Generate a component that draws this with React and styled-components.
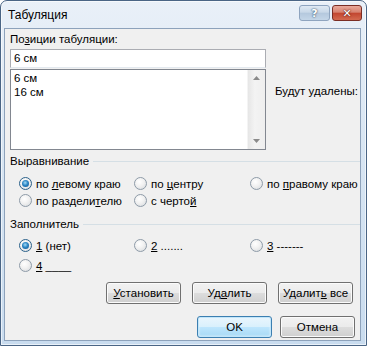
import React from 'react'
import styled, { createGlobalStyle, css } from 'styled-components'

const GlobalStyle = createGlobalStyle`
  html, body {
    margin: 0;
    padding: 0;
    background: #ffffff;
  }
  body {
    font-family: "Liberation Sans", Arial, sans-serif;
    font-size: 11.5px;
    color: #000;
  }
`

const Window = styled.div`
  box-sizing: border-box;
  width: 367px;
  height: 346px;
  display: flex;
  flex-direction: column;
  border: 1px solid #4a6585;
  border-radius: 7px 7px 0 0;
  padding: 0 5px 4px 3px;
  background: linear-gradient(180deg, #e9f0f8 0%, #d9e6f3 40%, #c9dcef 100%);
  box-shadow: inset 0 0 0 1px rgba(255, 255, 255, 0.6);
`

const TitleBar = styled.div`
  height: 27px;
  display: flex;
  align-items: flex-start;
  justify-content: space-between;
`

const Title = styled.div`
  margin: 6px 0 0 4px;
  font-size: 12px;
  line-height: 16px;
  color: #000;
`

const TitleButtons = styled.div`
  display: flex;
  gap: 2px;
  margin-top: 4px;
  margin-right: -1px;
`

const CaptionButton = styled.div`
  box-sizing: border-box;
  height: 16px;
  width: ${p => p.$w}px;
  border: 1px solid ${p => (p.$close ? '#7a2d24' : '#8ea4bf')};
  border-radius: 3px;
  display: flex;
  align-items: center;
  justify-content: center;
  font-family: "DejaVu Sans", sans-serif;
  font-weight: bold;
  font-size: 11px;
  color: #fff;
  text-shadow: 0 0 2px #37536f, 0 0 1px #37536f;
  ${p =>
    p.$close
      ? css`
          background: linear-gradient(180deg, #e9a99b 0%, #d7826f 45%, #c2452f 50%, #d36a4f 100%);
          text-shadow: 0 0 2px #5a1a10, 0 0 1px #5a1a10;
        `
      : css`
          background: linear-gradient(180deg, #dfe9f3 0%, #c8d8e8 45%, #b4c8dd 50%, #c4d6e8 100%);
        `}
`

const Content = styled.div`
  flex: 1;
  display: flex;
  flex-direction: column;
  border: 1px solid #8da2bb;
  background: #f0f0f0;
  padding: 0 0 0 5px;
`

const Label = styled.div`
  margin-top: 3px;
  line-height: 15px;
`

const U = styled.span`
  text-decoration: underline;
`

const PositionRow = styled.div`
  display: flex;
  margin-top: 2px;
`

const PositionColumn = styled.div`
  width: 256px;
  display: flex;
  flex-direction: column;
`

const TextInput = styled.div`
  box-sizing: border-box;
  height: 19px;
  border: 1px solid #abadb3;
  border-bottom-color: #e3e9ef;
  background: #fff;
  padding-left: 3px;
  line-height: 17px;
`

const ListBox = styled.div`
  box-sizing: border-box;
  margin-top: 1px;
  height: 81px;
  border: 1px solid #828790;
  background: #fff;
  display: flex;
`

const ListItems = styled.div`
  flex: 1;
  padding: 1px 0 0 3px;
`

const ListItem = styled.div`
  line-height: 14px;
`

const ScrollBar = styled.div`
  width: 17px;
  display: flex;
  flex-direction: column;
  justify-content: space-between;
  align-items: center;
  background: linear-gradient(90deg, #e6e6e6, #f3f3f3 40%, #eeeeee);
  border-left: 1px solid #f4f4f4;
  padding: 6px 0;
`

const SideNote = styled.div`
  margin: 35px 0 0 9px;
  line-height: 15px;
  white-space: nowrap;
`

const Group = styled.div`
  display: flex;
  align-items: center;
  line-height: 15px;
  margin-top: ${p => p.$top}px;

  &::after {
    content: '';
    flex: 1;
    margin-left: 4px;
    border-top: 1px solid #d5dfe5;
  }
`

const RadioGrid = styled.div`
  display: grid;
  grid-template-columns: 115px 116px auto;
  grid-auto-rows: 17px;
  row-gap: ${p => p.$gap}px;
  padding-left: 9px;
  margin-top: ${p => p.$top}px;
`

const RadioItem = styled.div`
  display: flex;
  align-items: center;
  gap: 4px;
  white-space: nowrap;
`

const RadioCircle = styled.span`
  box-sizing: border-box;
  width: 13px;
  height: 13px;
  border-radius: 50%;
  border: 1px solid #8e9ba8;
  background: radial-gradient(circle at 40% 35%, #ffffff 0%, #f1f1f1 45%, #d4d8dc 100%);
  display: flex;
  align-items: center;
  justify-content: center;
  flex-shrink: 0;

  ${p =>
    p.$checked &&
    css`
      border-color: #2c628b;
      &::after {
        content: '';
        width: 7px;
        height: 7px;
        border-radius: 50%;
        background: radial-gradient(circle at 45% 40%, #a4dcf8 0%, #2c86c4 45%, #0d4f8a 100%);
      }
    `}
`

const ButtonRow = styled.div`
  display: flex;
  justify-content: flex-end;
  gap: ${p => p.$gap}px;
  margin-top: ${p => p.$top}px;
  margin-right: ${p => p.$right}px;
`

const Button = styled.div`
  box-sizing: border-box;
  width: ${p => p.$w || 75}px;
  height: 22px;
  border: 1px solid #707070;
  border-radius: 3px;
  display: flex;
  align-items: center;
  justify-content: center;
  white-space: nowrap;
  background: linear-gradient(180deg, #f2f2f2 0%, #ebebeb 49%, #dddddd 50%, #cfcfcf 100%);
  box-shadow: inset 0 0 0 1px #fbfbfb;

  ${p =>
    p.$default &&
    css`
      border-color: #3c7fb1;
      background: linear-gradient(180deg, #eaf6fd 0%, #d9f0fc 49%, #bee6fd 50%, #a7d9f5 100%);
      box-shadow: inset 0 0 0 1px #c2e6fa, inset 0 0 2px 1px #e9f6fd;
    `}
`

function Arrow({ down }) {
  return (
    <svg width="7" height="4" viewBox="0 0 7 4">
      <path d={down ? 'M0 0 L7 0 L3.5 4 Z' : 'M0 4 L7 4 L3.5 0 Z'} fill="#8a8a8a" />
    </svg>
  )
}

function Radio({ checked, children }) {
  return (
    <RadioItem>
      <RadioCircle $checked={checked} />
      <span>{children}</span>
    </RadioItem>
  )
}

export default function App() {
  return (
    <>
      <GlobalStyle />
      <Window>
        <TitleBar>
          <Title>Табуляция</Title>
          <TitleButtons>
            <CaptionButton $w={31}>?</CaptionButton>
            <CaptionButton $w={30} $close>✕</CaptionButton>
          </TitleButtons>
        </TitleBar>

        <Content>
          <Label>
            По<U>з</U>иции табуляции:
          </Label>

          <PositionRow>
            <PositionColumn>
              <TextInput>6 см</TextInput>
              <ListBox>
                <ListItems>
                  <ListItem>6 см</ListItem>
                  <ListItem>16 см</ListItem>
                </ListItems>
                <ScrollBar>
                  <Arrow />
                  <Arrow down />
                </ScrollBar>
              </ListBox>
            </PositionColumn>
            <SideNote>Будут удалены:</SideNote>
          </PositionRow>

          <Group $top={4}>Выравнивание</Group>
          <RadioGrid $top={6} $gap={0}>
            <Radio checked>
              по <U>л</U>евому краю
            </Radio>
            <Radio>
              по <U>ц</U>ентру
            </Radio>
            <Radio>
              по <U>п</U>равому краю
            </Radio>
            <Radio>
              по раздели<U>т</U>елю
            </Radio>
            <Radio>
              с черто<U>й</U>
            </Radio>
          </RadioGrid>

          <Group $top={8}>Заполнитель</Group>
          <RadioGrid $top={5} $gap={3}>
            <Radio checked>
              <U>1</U> (нет)
            </Radio>
            <Radio>
              <U>2</U> .......
            </Radio>
            <Radio>
              <U>3</U> -------
            </Radio>
            <Radio>
              <U>4</U> ____
            </Radio>
          </RadioGrid>

          <ButtonRow $top={8} $gap={11} $right={7}>
            <Button>
              <span>
                <U>У</U>становить
              </span>
            </Button>
            <Button>
              <span>
                Уд<U>а</U>лить
              </span>
            </Button>
            <Button>
              <span>
                Удалит<U>ь</U> все
              </span>
            </Button>
          </ButtonRow>

          <ButtonRow $top={12} $gap={8} $right={5}>
            <Button $default>OK</Button>
            <Button>Отмена</Button>
          </ButtonRow>
        </Content>
      </Window>
    </>
  )
}
